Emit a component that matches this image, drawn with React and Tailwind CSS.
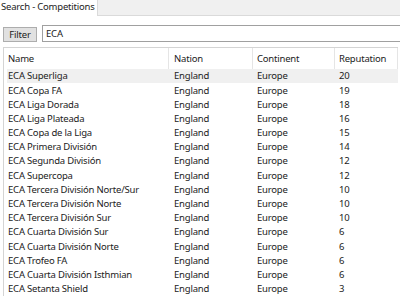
import React from "react";

const rows = [
  ["ECA Superliga", "20"],
  ["ECA Copa FA", "19"],
  ["ECA Liga Dorada", "18"],
  ["ECA Liga Plateada", "16"],
  ["ECA Copa de la Liga", "15"],
  ["ECA Primera División", "14"],
  ["ECA Segunda División", "12"],
  ["ECA Supercopa", "12"],
  ["ECA Tercera División Norte/Sur", "10"],
  ["ECA Tercera División Norte", "10"],
  ["ECA Tercera División Sur", "10"],
  ["ECA Cuarta División Sur", "6"],
  ["ECA Cuarta División Norte", "6"],
  ["ECA Trofeo FA", "6"],
  ["ECA Cuarta División Isthmian", "6"],
  ["ECA Setanta Shield", "3"],
];

const App = () => {
  return (
    <div className="w-[400px] h-[301px] overflow-hidden bg-white text-[9.5px] tracking-[-0.2px] text-[#222] font-['Noto_Sans',sans-serif] leading-none whitespace-nowrap">
      <div className="flex h-[16px]">
        <div className="shrink-0 pl-[1px] pr-[2px] pt-[2px]">Search - Competitions</div>
        <div className="flex-1 bg-[#f0f0f0] border-l border-b border-[#dadada]"></div>
      </div>

      <div className="flex items-end gap-[5px] pl-[3px] mt-[9px] h-[17px]">
        <button className="w-[34px] h-[15px] bg-[#e1e1e1] border border-[#adadad] flex items-center justify-center">
          Filter
        </button>
        <div className="flex-1 h-[17px] border border-[#a0a0a0] border-r-0 flex items-center pl-[3px]">
          ECA
        </div>
      </div>

      <div className="ml-[3px] mt-[5px] w-[395px] border-l border-t border-[#d4d4d4]">
        <div className="flex h-[21px] items-center">
          <div className="w-[165px] h-full flex items-center pl-[4px] border-r border-[#e5e5e5]">Name</div>
          <div className="w-[84px] h-full flex items-center pl-[5px] border-r border-[#e5e5e5]">Nation</div>
          <div className="w-[82px] h-full flex items-center pl-[4px] border-r border-[#e5e5e5]">Continent</div>
          <div className="flex-1 h-full flex items-center pl-[4px] border-r border-[#e5e5e5]">Reputation</div>
        </div>
        {rows.map((r, i) => (
          <div
            key={i}
            className={
              i === 0
                ? "flex h-[14.2px] items-center ml-[3px] bg-[#f0f0f0]"
                : "flex h-[14.2px] items-center ml-[3px]"
            }
          >
            <div className="w-[162px] pl-[1px]">{r[0]}</div>
            <div className="w-[84px] pl-[5px]">England</div>
            <div className="w-[82px] pl-[4px]">Europe</div>
            <div className="flex-1 pl-[4px]">{r[1]}</div>
          </div>
        ))}
      </div>
    </div>
  );
};

export default App;
